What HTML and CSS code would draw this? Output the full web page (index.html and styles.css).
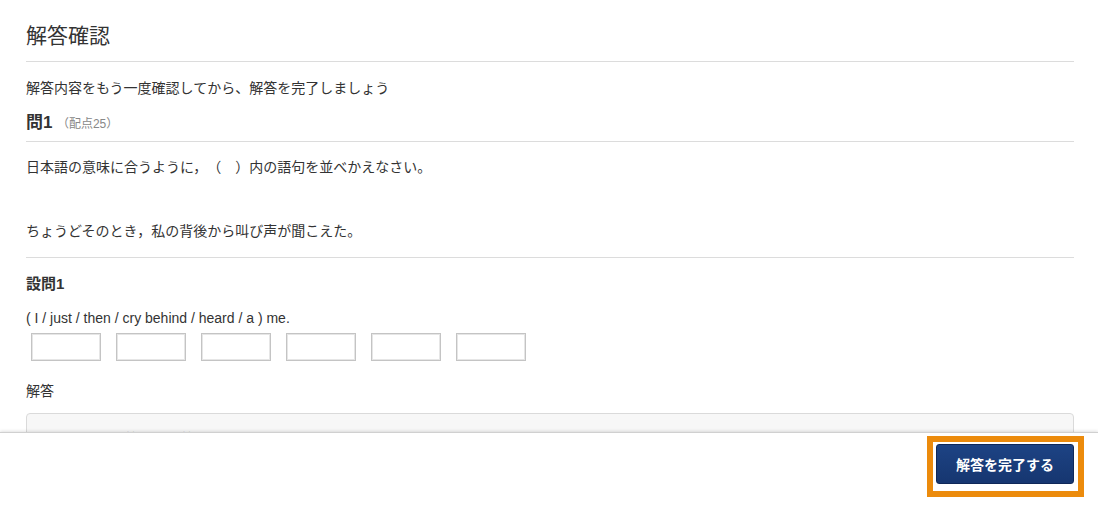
FILE: index.html
```html
<!DOCTYPE html>
<html lang="ja">
<head>
    <meta charset="UTF-8">
    <meta name="viewport" content="width=device-width, initial-scale=1.0">
    <title>解答確認</title>
    <link rel="stylesheet" href="styles.css">
</head>
<body>
    <div id="confirm-page">
        <div id="page-header">
            <h1>解答確認</h1>
        </div>
        <p class="lead">解答内容をもう一度確認してから、解答を完了しましょう</p>

        <div class="question-head">
            <span class="question-no">問1</span>
            <span class="question-score">（配点25）</span>
        </div>

        <div class="question-body">
            <p class="instruction">日本語の意味に合うように，（　）内の語句を並べかえなさい。</p>
            <p class="japanese">ちょうどそのとき，私の背後から叫び声が聞こえた。</p>
        </div>

        <div class="sub-question">
            <h3>設問1</h3>
            <p class="english">( I / just / then / cry behind / heard / a ) me.</p>
            <div class="answer-boxes">
                <input type="text" class="word-box">
                <input type="text" class="word-box">
                <input type="text" class="word-box">
                <input type="text" class="word-box">
                <input type="text" class="word-box">
                <input type="text" class="word-box">
            </div>
            <p class="answer-label">解答</p>
            <div class="answer-panel">
                <p>あなたの解答　未回答</p>
                <p>正解　I just then heard a cry behind me.</p>
            </div>
        </div>
    </div>

    <div id="page-footer">
        <div id="finish-area">
            <button id="finish-button">解答を完了する</button>
        </div>
    </div>
</body>
</html>
```

FILE: styles.css
```css
body {
    margin: 0;
    font-family: "Liberation Sans", "Noto Sans CJK JP", sans-serif;
    color: #333;
    background: #fff;
    text-spacing-trim: space-all;
}
p {
    margin: 0;
}
#confirm-page {
    padding: 0 24px 120px 26px;
}

#page-header {
    padding: 22px 0 11px;
    border-bottom: 1px solid #dcdcdc;
}
#page-header h1 {
    margin: 0;
    font-size: 21px;
    font-weight: normal;
    line-height: 28px;
}

.lead {
    margin-top: 16px;
    font-size: 14px;
    line-height: 20px;
}

.question-head {
    margin-top: 13px;
    padding-bottom: 5px;
    border-bottom: 1px solid #dcdcdc;
    line-height: 24px;
}
.question-no {
    font-size: 17px;
    font-weight: bold;
}
.question-score {
    font-size: 12px;
    color: #888;
}

.question-body {
    padding: 15px 0 16px;
    border-bottom: 1px solid #dcdcdc;
    font-size: 14px;
    line-height: 20px;
}
.japanese {
    margin-top: 44px;
}

.sub-question h3 {
    margin: 16px 0 0;
    font-size: 15px;
    line-height: 20px;
}
.english {
    margin-top: 14px;
    font-size: 14px;
    line-height: 20px;
}
.answer-boxes {
    display: flex;
    gap: 15px;
    margin-top: 5px;
    padding-left: 5px;
}
.word-box {
    width: 70px;
    height: 28px;
    box-sizing: border-box;
    border: 1px solid #c4c4c4;
    box-shadow: inset 0 0 0 1px #e6e6e6;
    margin: 0;
    padding: 0 4px;
}
.answer-label {
    margin-top: 20px;
    font-size: 14px;
    line-height: 20px;
}
.answer-panel {
    margin-top: 12px;
    padding: 14px 28px;
    border: 1px solid #dadada;
    border-radius: 4px;
    background: #f7f7f7;
    font-size: 14px;
    line-height: 22px;
}

/* 画面下に固定されるボタンエリア */
#page-footer {
    position: fixed;
    left: 0;
    right: 0;
    bottom: 0;
    height: 82px;
    box-sizing: border-box;
    padding: 3px 14px 0 0;
    display: flex;
    justify-content: flex-end;
    align-items: flex-start;
    background: #fff;
    border-top: 1px solid #d0d0d0;
    box-shadow: 0 -1px 3px rgba(0, 0, 0, 0.12);
    z-index: 10;
}
#finish-area {
    display: flex;
    padding: 2px 4px 7px 3px;
    border: 6px solid #ec8b0c;
    background: #fff;
}
#finish-button {
    width: 138px;
    height: 40px;
    border: 1px solid #0f2858;
    border-radius: 3px;
    background: linear-gradient(#1d4384, #163670);
    color: #fff;
    font-family: "Liberation Sans", "Noto Sans CJK JP", sans-serif;
    font-size: 14px;
    font-weight: bold;
    cursor: pointer;
}
```
